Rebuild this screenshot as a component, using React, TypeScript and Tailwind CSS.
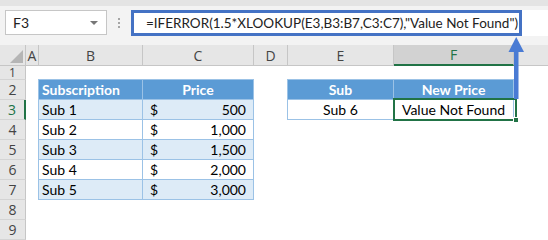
import React from "react";

const cellFont = { fontFamily: "Lato, 'Open Sans', sans-serif" };

const rows = [
  { n: 1, h: "h-[14px]" },
  { n: 2, h: "h-[20px]" },
  { n: 3, h: "h-[20px]" },
  { n: 4, h: "h-[20px]" },
  { n: 5, h: "h-[20px]" },
  { n: 6, h: "h-[20px]" },
  { n: 7, h: "h-[20px]" },
  { n: 8, h: "h-[20px]" },
  { n: 9, h: "h-[20px]" },
];

const data: Record<number, [string, string]> = {
  3: ["Sub 1", "500"],
  4: ["Sub 2", "1,000"],
  5: ["Sub 3", "1,500"],
  6: ["Sub 4", "2,000"],
  7: ["Sub 5", "3,000"],
};

const App = () => {
  return (
    <div className="relative w-[548px] h-[240px] overflow-hidden bg-white" style={{ fontFamily: "'Open Sans', sans-serif" }}>
      {/* top strip */}
      <div className="h-[6px] bg-[#e4e4e4]" />

      {/* formula bar */}
      <div className="flex h-[39px] bg-[#f3f3f3] pt-[4px]">
        <div className="ml-[5px] w-[102px] h-[25px] bg-white border border-[#c6c6c6] flex items-center justify-between pl-[7px] pr-[8px]">
          <span className="text-[14px] text-[#222]" style={cellFont}>F3</span>
          <span className="w-0 h-0 border-l-[4px] border-r-[4px] border-t-[4px] border-l-transparent border-r-transparent border-t-[#777]" />
        </div>
        <div className="w-[24px] flex flex-col items-center justify-center gap-[2px] h-[25px]">
          <span className="w-[2px] h-[2px] bg-[#a6a6a6]" />
          <span className="w-[2px] h-[2px] bg-[#a6a6a6]" />
          <span className="w-[2px] h-[2px] bg-[#a6a6a6]" />
        </div>
        <div className="flex-1 h-[26px] bg-white flex">
          <div className="w-[391px] h-[26px] border-[3px] border-[#4472c4] flex items-center pl-[12px] text-[13.5px] text-[#222] whitespace-nowrap" style={cellFont}>
            =IFERROR(1.5*XLOOKUP(E3,B3:B7,C3:C7),"Value Not Found")
          </div>
        </div>
      </div>

      {/* column headers */}
      <div className="flex h-[21px] bg-[#e6e6e6] text-[14px] text-[#444]">
        <div className="w-[26px] border-r border-b border-[#c6c6c6] relative">
          <svg className="absolute right-[2px] bottom-[2px]" width="13" height="13"><polygon points="13,0 13,13 0,13" fill="#b5b5b5" /></svg>
        </div>
        <div className="w-[13px] border-r border-b border-[#c6c6c6] flex items-center justify-center">A</div>
        <div className="w-[104px] border-r border-b border-[#c6c6c6] flex items-center justify-center">B</div>
        <div className="w-[111px] border-r border-b border-[#c6c6c6] flex items-center justify-center">C</div>
        <div className="w-[34px] border-r border-b border-[#c6c6c6] flex items-center justify-center">D</div>
        <div className="w-[106px] border-r border-b border-[#c6c6c6] flex items-center justify-center">E</div>
        <div className="w-[120px] border-r border-b-2 border-r-[#c6c6c6] border-b-[#217346] bg-[#d2d2d2] text-[#217346] flex items-center justify-center">F</div>
        <div className="flex-1 border-b border-[#c6c6c6]" />
      </div>

      {/* rows */}
      {rows.map(({ n, h }) => {
        const inTable1 = n >= 2 && n <= 7;
        const inTable2 = n >= 2 && n <= 3;
        const alt = n % 2 === 1;
        const t1bg = n === 2 ? "bg-[#5b9bd5]" : alt ? "bg-[#ddebf7]" : "bg-white";
        const t2bg = n === 2 ? "bg-[#5b9bd5]" : "bg-white";
        const tb = "border-[#9bc2e6]";
        const sel = n === 3;
        return (
          <div key={n} className={`flex ${h} text-[14px] text-black`} style={cellFont}>
            <div
              className={`w-[26px] bg-[#e6e6e6] border-b border-[#d4d4d4] flex items-center justify-center ${
                sel ? "bg-[#d2d2d2] text-[#217346] border-r-2 border-r-[#217346]" : "text-[#444] border-r border-r-[#c6c6c6]"
              } ${n === 1 ? "text-[12px] leading-[12px]" : "text-[14px] leading-[19px]"}`}
              style={{ fontFamily: "'Open Sans', sans-serif" }}
            >
              {n}
            </div>
            <div className="w-[12px]" />
            {/* B */}
            <div
              className={`w-[105px] flex items-center pl-[3px] ${
                n === 1 ? `border-b ${tb}` : inTable1 ? `border-l border-r border-b ${tb} ${t1bg}` : ""
              } ${n === 2 ? "font-bold text-white" : ""}`}
            >
              {n === 2 ? "Subscription" : data[n]?.[0]}
            </div>
            {/* C */}
            <div
              className={`w-[111px] flex items-center ${
                n === 1 ? `border-b ${tb}` : inTable1 ? `border-r border-b ${tb} ${t1bg}` : ""
              } ${n === 2 ? "justify-center font-bold text-white" : "justify-between pl-[7px] pr-[7px]"}`}
            >
              {n === 2 ? "Price" : data[n] ? (
                <>
                  <span>$</span>
                  <span>{data[n][1]}</span>
                </>
              ) : null}
            </div>
            <div className="w-[33px]" />
            {/* E */}
            <div
              className={`w-[107px] flex items-center justify-center ${
                n === 1 ? `border-b ${tb}` : inTable2 ? `border-l border-r border-b ${tb} ${t2bg}` : ""
              } ${n === 2 ? "font-bold text-white" : ""}`}
            >
              {n === 2 ? "Sub" : n === 3 ? "Sub 6" : null}
            </div>
            {/* F */}
            <div
              className={`relative w-[120px] flex items-center justify-center ${
                n === 1 ? `border-b ${tb}` : inTable2 ? `border-r border-b ${tb} ${t2bg}` : ""
              } ${n === 2 ? "font-bold text-white" : ""}`}
            >
              {n === 2 ? "New Price" : n === 3 ? "Value Not Found" : null}
              {sel && (
                <div className="absolute left-[-1px] top-[-2px] w-[124px] h-[23px] border-2 border-[#217346] pointer-events-none">
                  <div className="absolute left-[118px] top-[17px] w-[6px] h-[6px] bg-[#217346] border border-white" />
                </div>
              )}
            </div>
            <div className="flex-1" />
          </div>
        );
      })}

      {/* arrow */}
      <svg className="absolute left-0 top-0 pointer-events-none" width="548" height="240">
        <rect x="514" y="50" width="4.5" height="49" fill="#4a7bd4" />
        <polygon points="508.5,52 516.2,37 524,52" fill="#4a7bd4" />
      </svg>
    </div>
  );
};

export default App;
